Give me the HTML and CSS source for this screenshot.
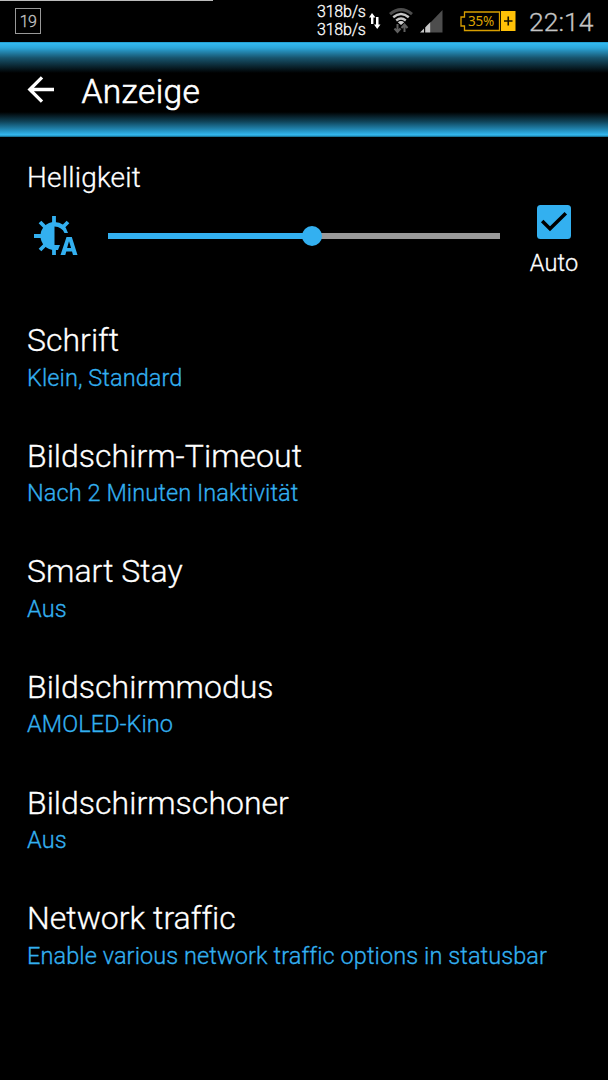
FILE: index.html
```html
<!DOCTYPE html>
<html lang="de">
<head>
<meta charset="utf-8">
<title>Anzeige</title>
<link rel="stylesheet" href="styles.css">
</head>
<body>
<div class="statusbar">
  <div class="progress"></div>
  <div class="badge">19</div>
  <div class="traffic"><span>318b/s</span><span>318b/s</span></div>
  <svg class="updown" width="12" height="18" viewBox="0 0 12 18"><path d="M3 1L0 5.500h2V12h2.400V5.500H6.500zM8.200 17l3.300-4.500h-2V5H7v7.500H5z" fill="#fff"/></svg>
  <svg class="wifi" width="24" height="26" viewBox="0 0 24 26" fill="none">
    <path d="M1 6.200Q12-3 23 6.200" stroke="#4d4d4d" stroke-width="3"/>
    <path d="M4.200 9.300Q12 2.900 19.800 9.300M7.200 12.500Q12 8.700 16.800 12.500" stroke="#c6c6c6" stroke-width="2.400"/>
    <path d="M8.800 14.200Q12 11.800 15.200 14.200L12 17z" fill="#d0d0d0"/>
    <path d="M8.500 16v6M5.500 20.500l3 3.500 3-3.500M15.500 24v-6M12.500 20l3-3.500 3 3.500" stroke="#606060" stroke-width="2"/>
  </svg>
  <svg class="signal" width="23" height="23" viewBox="0 0 23 23">
    <path d="M11 12L22.500 0v22.500H11z" fill="#4d4d4d"/>
    <path d="M0 22.500l4-4v4zM5 17.500l4.500-4.500v9.500H5zM6.500 16l4-4v10.500h-4z" fill="#c6c6c6"/>
    <path d="M4.200 0h1v23h-1z" fill="#000"/>
  </svg>
  <div class="battery">
    <svg width="57" height="21" viewBox="0 0 57 21"><path d="M4.500 1H39.500V19.500H4.500V15H1V6H4.500z" fill="none" stroke="#d79e00" stroke-width="1.300"/><path d="M41 0h14.500v20H41z" fill="#ffc107"/><path d="M44 10h8.500M48.250 5.500v9" stroke="#171200" stroke-width="1.600"/></svg>
    <span class="percent">35%</span>
  </div>
  <div class="clock">22:14</div>
</div>
<header class="titlebar">
  <svg width="28" height="28" viewBox="0 0 28 28" fill="none" stroke="#fff" stroke-width="3.300"><path d="M27 13.500H3M15 1.300L2.800 13.500 15 25.700"/></svg>
  <h1>Anzeige</h1>
</header>
<main>
  <section class="brightness">
    <div class="level">
      <h2>Helligkeit</h2>
      <div class="control">
        <svg class="sun" width="44" height="42" viewBox="0 0 44 42">
          <g stroke="#33b0f0" stroke-width="3.800"><path d="M20 1v7M20 32v8M0 21h8M6 7l5 5M6 35l5-5M34 7l-5 5"/></g>
          <path d="M20.500 7A14 14 0 1 0 20.500 35H24L26 30H20.500V11.500Q28 12 30.500 18H34Q31 7 20.500 7z" fill="#33b0f0"/>
          <path d="M32.500 22h5.300L43.500 40H39l-1-3.600h-5.700l-1 3.600H26.500zM35 26.300l-1.900 6.800h4z" fill="#33b0f0" fill-rule="evenodd"/>
        </svg>
        <div class="track"><div class="fill"></div><div class="thumb"></div></div>
      </div>
    </div>
    <div class="auto">
      <svg width="34" height="34" viewBox="0 0 34 34"><rect width="34" height="34" rx="3.500" fill="#33b0f0"/><path d="M5.200 16L13 23.800 28.800 8.200" fill="none" stroke="#000" stroke-width="3.500"/></svg>
      <span class="autolabel">Auto</span>
    </div>
  </section>
  <section class="item"><h3>Schrift</h3><p>Klein, Standard</p></section>
  <section class="item"><h3>Bildschirm-Timeout</h3><p>Nach 2 Minuten Inaktivität</p></section>
  <section class="item"><h3>Smart Stay</h3><p>Aus</p></section>
  <section class="item"><h3>Bildschirmmodus</h3><p>AMOLED-Kino</p></section>
  <section class="item"><h3>Bildschirmschoner</h3><p>Aus</p></section>
  <section class="item"><h3>Network traffic</h3><p>Enable various network traffic options in statusbar</p></section>
</main>
</body>
</html>
```
FILE: styles.css
```css
* { box-sizing: border-box; margin: 0; padding: 0; }
body { width: 608px; height: 1080px; overflow: hidden; background: #000; color: #fff; font-family: Roboto, sans-serif; font-weight: 300; -webkit-text-stroke: 0.3px currentColor; }
h1, h2, h3 { font-weight: inherit; }
svg { display: block; flex: none; }
.statusbar { position: relative; height: 42px; display: flex; align-items: flex-start; }
.progress { position: absolute; left: 0; top: 0; width: 213px; height: 1px; background: #bcbcbc; }
.badge { width: 26px; height: 26px; margin: 8px 0 0 15px; border: 1.5px solid #999; color: #c4c4c4; font-size: 16px; letter-spacing: -0.6px; line-height: 25px; text-align: center; }
.traffic { width: 49px; margin: 3px 0 0 276px; display: flex; flex-direction: column; font-size: 16px; letter-spacing: -0.2px; line-height: 17.5px; white-space: nowrap; }
.updown { margin: 12px 0 0 3px; }
.wifi { margin: 8px 0 0 8px; }
.signal { margin: 10px 0 0 7px; }
.battery { position: relative; margin: 11px 0 0 17px; }
.percent { position: absolute; left: 8px; top: 1px; color: #dca300; font: 13.5px/18px "Noto Sans", sans-serif; letter-spacing: -0.2px; -webkit-text-stroke: 0; }
.clock { margin: 4px 0 0 12px; color: #c4c4c4; font-size: 26.5px; line-height: 35px; }
.titlebar { height: 95px; display: flex; align-items: center; gap: 26.5px; padding: 1px 0 0 27px; background: linear-gradient(#168ab8 0, #33b9f0 1px, #2ba5d8 6px, #17536c 16px, #000 31px, #000 70px, #10475e 80px, #2594c4 89px, #33b9f0 93px, #126080 95px); }
.titlebar h1 { font-size: 33.5px; line-height: 40px; margin-top: 3px; letter-spacing: 0.35px; -webkit-text-stroke: 0.6px currentColor; }
main { padding: 0 27px; }
.brightness { height: 173px; display: flex; }
.level { width: 473px; padding-top: 24px; }
.level h2 { font-size: 28px; letter-spacing: 0.2px; line-height: 33px; }
.control { display: flex; margin-left: 7px; padding-top: 21px; }
.track { position: relative; width: 392px; height: 6px; margin: 18px 0 0 30px; background: #999; }
.fill { width: 204px; height: 6px; background: #33b0f0; }
.thumb { position: absolute; left: 194px; top: -7px; width: 20px; height: 20px; border-radius: 50%; background: #33b0f0; }
.auto { width: 108px; padding-top: 68px; margin-right: -27px; display: flex; flex-direction: column; align-items: center; }
.autolabel { font-size: 23.5px; letter-spacing: 0.1px; line-height: 28px; margin-top: 10px; }
.item { height: 115.6px; padding-top: 11.3px; white-space: nowrap; }
.item h3 { font-size: 32px; line-height: 38px; letter-spacing: 0.02px; }
.item p { font-size: 23.5px; letter-spacing: 0.09px; line-height: 28px; margin-top: 4.3px; color: #33b0f0; }
```
